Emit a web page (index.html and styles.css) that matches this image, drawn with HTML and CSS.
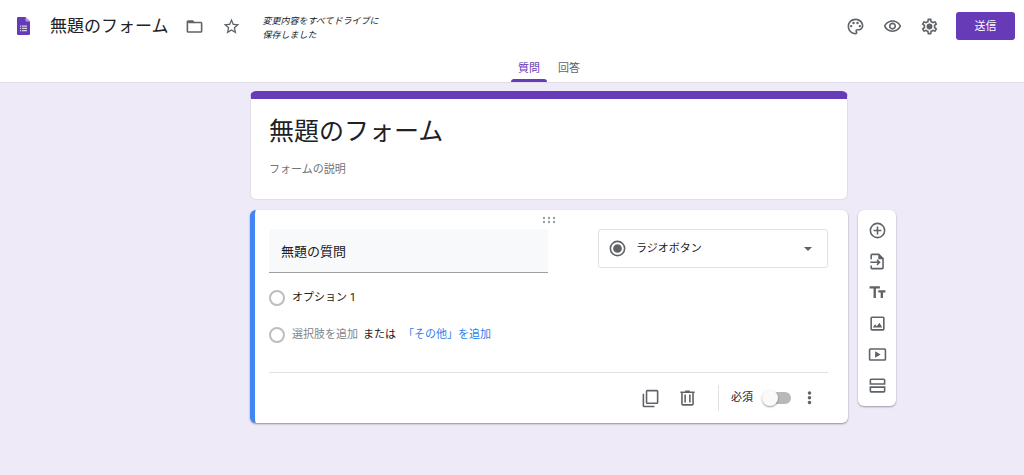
FILE: index.html
```html
<!DOCTYPE html>
<html lang="ja">
<head>
<meta charset="utf-8">
<meta name="viewport" content="width=device-width, initial-scale=1">
<title>無題のフォーム</title>
<link rel="stylesheet" href="styles.css">
</head>
<body>
<header class="header">
  <div class="topbar">
    <svg class="logo" viewBox="0 0 13 18" aria-hidden="true">
      <path fill="#673ab7" d="M1.2 0H8.500L13 4.500V16.800A1.200 1.200 0 0 1 11.800 18H1.200A1.200 1.200 0 0 1 0 16.800V1.200A1.200 1.200 0 0 1 1.200 0z"/>
      <path fill="#b39ddb" d="M8.500 0L13 4.500H9.500a1 1 0 0 1-1-1z"/>
      <path fill="#d9cbef" d="M3 8.600h1.200v1.200H3zM5 8.600h5v1.200H5zM3 10.800h1.200V12H3zM5 10.800h5V12H5zM3 13h1.200v1.200H3zM5 13h5v1.200H5z"/>
    </svg>
    <h1 class="doc-title">無題のフォーム</h1>
    <button class="icon-button" type="button" aria-label="フォルダに移動">
      <svg class="icon" viewBox="0 0 24 24"><path d="M9.170 6l2 2H20v10H4V6h5.170M10 4H4c-1.100 0-1.990.9-1.990 2L2 18c0 1.100.9 2 2 2h16c1.100 0 2-.9 2-2V8c0-1.100-.9-2-2-2h-8l-2-2z"/><path d="M4 5h6l2 3H4z"/></svg>
    </button>
    <button class="icon-button" type="button" aria-label="スターを付ける">
      <svg class="icon" viewBox="0 0 24 24"><path d="M22 9.240l-7.190-.62L12 2 9.190 8.630 2 9.240l5.460 4.730L5.820 21 12 17.270 18.180 21l-1.630-7.030L22 9.240zM12 15.400l-3.760 2.270 1-4.280-3.320-2.880 4.380-.38L12 6.100l1.710 4.040 4.380.38-3.320 2.880 1 4.280L12 15.400z"/></svg>
    </button>
    <p class="save-status">変更内容をすべてドライブに<br>保存しました</p>
    <div class="actions">
      <button class="icon-button" type="button" aria-label="テーマをカスタマイズ">
        <svg class="icon" viewBox="0 0 24 24"><path d="M12 22C6.490 22 2 17.510 2 12S6.490 2 12 2s10 4.040 10 9c0 3.310-2.690 6-6 6h-1.770c-.28 0-.5.22-.5.5 0 .12.05.23.13.33.41.47.64 1.060.64 1.670A2.500 2.500 0 0 1 12 22zm0-18c-4.410 0-8 3.590-8 8s3.590 8 8 8c.28 0 .5-.22.5-.5a.54.54 0 0 0-.14-.35c-.41-.46-.63-1.050-.63-1.650a2.500 2.500 0 0 1 2.500-2.500H16c2.210 0 4-1.790 4-4 0-3.860-3.590-7-8-7z"/><circle cx="6.500" cy="11.500" r="1.500"/><circle cx="9.500" cy="7.500" r="1.500"/><circle cx="14.500" cy="7.500" r="1.500"/><circle cx="17.500" cy="11.500" r="1.500"/></svg>
      </button>
      <button class="icon-button" type="button" aria-label="プレビュー">
        <svg class="icon" viewBox="0 0 24 24"><path d="M12 6c3.790 0 7.170 2.130 8.820 5.500C19.170 14.870 15.790 17 12 17s-7.170-2.130-8.820-5.500C4.830 8.130 8.210 6 12 6m0-2C7 4 2.730 7.110 1 11.500 2.730 15.890 7 19 12 19s9.270-3.110 11-7.500C21.270 7.110 17 4 12 4zm0 5a2.500 2.500 0 1 1 0 5 2.500 2.500 0 0 1 0-5m0-2c-2.480 0-4.500 2.020-4.500 4.500S9.520 16 12 16s4.500-2.020 4.500-4.500S14.480 7 12 7z"/></svg>
      </button>
      <button class="icon-button" type="button" aria-label="設定">
        <svg class="icon" viewBox="0 0 24 24"><path d="M19.430 12.980c.04-.32.07-.64.07-.98 0-.34-.03-.66-.07-.98l2.110-1.650c.19-.15.24-.42.12-.64l-2-3.460c-.09-.16-.26-.25-.44-.25-.06 0-.12.01-.17.03l-2.490 1c-.52-.4-1.080-.73-1.690-.98l-.38-2.650C14.460 2.180 14.250 2 14 2h-4c-.25 0-.46.18-.49.42l-.38 2.650c-.61.25-1.170.59-1.690.98l-2.490-1c-.06-.02-.12-.03-.18-.03-.17 0-.34.09-.43.25l-2 3.460c-.13.22-.07.49.12.64l2.110 1.650c-.04.32-.07.65-.07.98s.03.66.07.98l-2.110 1.650c-.19.15-.24.42-.12.64l2 3.460c.09.16.26.25.44.25.06 0 .12-.01.17-.03l2.490-1c.52.4 1.080.73 1.690.98l.38 2.650c.03.24.24.42.49.42h4c.25 0 .46-.18.49-.42l.38-2.650c.61-.25 1.170-.59 1.690-.98l2.490 1c.06.02.12.03.18.03.17 0 .34-.09.43-.25l2-3.460c.12-.22.07-.49-.12-.64l-2.110-1.650zm-1.980-1.710c.04.31.05.52.05.73 0 .21-.02.43-.05.73l-.14 1.130.89.7 1.080.84-.7 1.210-1.270-.51-1.040-.42-.9.68c-.43.32-.84.56-1.250.73l-1.060.43-.16 1.130-.2 1.350h-1.400l-.19-1.350-.16-1.130-1.060-.43c-.43-.18-.83-.41-1.230-.71l-.91-.7-1.060.43-1.270.51-.7-1.210 1.080-.84.89-.7-.14-1.130c-.03-.31-.05-.54-.05-.74s.02-.43.05-.73l.14-1.130-.89-.7-1.080-.84.7-1.210 1.270.51 1.040.42.9-.68c.43-.32.84-.56 1.250-.73l1.060-.43.16-1.130.2-1.350h1.390l.19 1.350.16 1.130 1.060.43c.43.18.83.41 1.230.71l.91.7 1.060-.43 1.270-.51.7 1.210-1.070.85-.89.7.14 1.130z"/><circle cx="12" cy="12" r="3.700"/></svg>
      </button>
      <button class="send" type="button">送信</button>
    </div>
  </div>
  <nav class="tabs">
    <a class="tab tab-active" href="#questions" aria-current="page">質問</a>
    <a class="tab" href="#responses">回答</a>
  </nav>
</header>

<main class="editor" id="questions">
  <div class="cards">
    <section class="card title-card">
      <input class="form-title" type="text" value="無題のフォーム" aria-label="フォームのタイトル">
      <input class="form-description" type="text" placeholder="フォームの説明" aria-label="フォームの説明">
    </section>

    <section class="card question-card">
      <svg class="drag-handle" viewBox="0 0 14 8" aria-hidden="true"><circle cx="2" cy="2" r="1.200"/><circle cx="7" cy="2" r="1.200"/><circle cx="12" cy="2" r="1.200"/><circle cx="2" cy="6" r="1.200"/><circle cx="7" cy="6" r="1.200"/><circle cx="12" cy="6" r="1.200"/></svg>
      <div class="question-head">
        <input class="question-title" type="text" value="無題の質問" aria-label="質問">
        <div class="type-picker">
          <svg class="icon" viewBox="0 0 24 24" aria-hidden="true"><path d="M12 2a10 10 0 1 0 0 20 10 10 0 0 0 0-20zm0 18a8 8 0 1 1 0-16 8 8 0 0 1 0 16z"/><circle cx="12" cy="12" r="5.500"/></svg>
          <select class="type-select" aria-label="質問の種類">
            <option>ラジオボタン</option>
            <option>チェックボックス</option>
            <option>プルダウン</option>
          </select>
          <svg class="caret" viewBox="0 0 8 4" aria-hidden="true"><path d="M0 0h8L4 4z"/></svg>
        </div>
      </div>
      <div class="options">
        <div class="option">
          <input class="radio" type="radio" name="answer" id="option-1" disabled>
          <label class="option-label" for="option-1">オプション 1</label>
        </div>
        <div class="option">
          <input class="radio" type="radio" name="answer" aria-label="新しい選択肢" disabled>
          <button class="add-option" type="button">選択肢を追加</button>
          <span class="or">または</span>
          <button class="add-other" type="button">「その他」を追加</button>
        </div>
      </div>
      <footer class="question-foot">
        <button class="icon-button" type="button" aria-label="コピーを作成">
          <svg class="icon" viewBox="0 0 24 24"><path d="M20 1H8a2 2 0 0 0-2 2v14a2 2 0 0 0 2 2h12a2 2 0 0 0 2-2V3a2 2 0 0 0-2-2zm0 16H8V3h12zM2 6h2v15h13v2H4a2 2 0 0 1-2-2z"/></svg>
        </button>
        <button class="icon-button" type="button" aria-label="削除">
          <svg class="icon" viewBox="0 0 24 24"><path d="M15 3V2H9v1H3v2h1v14c0 1.100.9 2 2 2h12c1.100 0 2-.9 2-2V5h1V3h-6zm3 16H6V5h12v14zM8 7h2v10H8zm6 0h2v10h-2z"/></svg>
        </button>
        <label class="required">必須<input class="switch" type="checkbox" role="switch"></label>
        <button class="more" type="button" aria-label="その他のオプション">
          <svg class="icon" viewBox="0 0 24 24"><circle cx="12" cy="5" r="2.200"/><circle cx="12" cy="11" r="2.200"/><circle cx="12" cy="17" r="2.200"/></svg>
        </button>
      </footer>
    </section>
  </div>

  <div class="toolbar" role="toolbar" aria-label="追加">
    <button class="tool" type="button" aria-label="質問を追加">
      <svg class="icon" viewBox="0 0 24 24"><path d="M13 7h-2v4H7v2h4v4h2v-4h4v-2h-4V7zm-1-5a10 10 0 1 0 0 20 10 10 0 0 0 0-20zm0 18a8 8 0 1 1 0-16 8 8 0 0 1 0 16z"/></svg>
    </button>
    <button class="tool" type="button" aria-label="質問をインポート">
      <svg class="icon" viewBox="0 0 24 24"><path d="M14 2H5a2 2 0 0 0-2 2v5h2V4h8v5h5v11H5v-3H3v3a2 2 0 0 0 2 2h13a2 2 0 0 0 2-2V8zM12 17l4-4-4-4-1.400 1.400L12.200 12H3v2h9.200l-1.600 1.600z"/></svg>
    </button>
    <button class="tool" type="button" aria-label="タイトルと説明を追加">
      <svg class="icon" viewBox="0 0 24 24"><path d="M2 4v3h5v12h3V7h5V4H2zm20 5h-9v3h3v7h3v-7h3V9z"/></svg>
    </button>
    <button class="tool" type="button" aria-label="画像を追加">
      <svg class="icon" viewBox="0 0 24 24"><path d="M19 3H5a2 2 0 0 0-2 2v14a2 2 0 0 0 2 2h14a2 2 0 0 0 2-2V5a2 2 0 0 0-2-2zm0 16H5V5h14zM6 17l3-4 2 2.500 3.500-4.500L18 17z"/></svg>
    </button>
    <button class="tool" type="button" aria-label="動画を追加">
      <svg class="icon" viewBox="0 0 24 24"><path d="M21 4H3a2 2 0 0 0-2 2v12a2 2 0 0 0 2 2h18a2 2 0 0 0 2-2V6a2 2 0 0 0-2-2zm0 14H3V6h18zM9 8v8l7-4z"/></svg>
    </button>
    <button class="tool" type="button" aria-label="セクションを追加">
      <svg class="icon" viewBox="0 0 24 24"><path d="M20 3H4a2 2 0 0 0-2 2v6h20V5a2 2 0 0 0-2-2zm0 6H4V5h16zM2 13v6a2 2 0 0 0 2 2h16a2 2 0 0 0 2-2v-6zm18 6H4v-4h16z"/></svg>
    </button>
  </div>
</main>
</body>
</html>
```
FILE: styles.css
```css
*,
*::before,
*::after {
  box-sizing: border-box;
}

body {
  margin: 0;
  min-height: 100vh;
  background: #eeeaf7;
  color: #202124;
  font: 11px/16px Roboto, "Noto Sans CJK JP", sans-serif;
}

button,
input,
select {
  margin: 0;
  padding: 0;
  border: 0;
  background: none;
  color: inherit;
  font: inherit;
}

button {
  cursor: pointer;
}

.icon {
  display: block;
  width: 19px;
  height: 19px;
  flex: none;
  fill: #5f6368;
}

.icon-button {
  display: grid;
  place-items: center;
  width: 37px;
  height: 32px;
}

/* Header */

.header {
  background: #fff;
  border-bottom: 1px solid #dfdde6;
}

.topbar {
  display: flex;
  align-items: center;
  height: 52px;
  padding: 0 9px 0 17px;
}

.logo {
  width: 13px;
  height: 18px;
  margin-right: 20px;
}

.doc-title {
  margin: 0 7px 0 0;
  font-size: 17px;
  font-weight: 400;
  line-height: 24px;
}

.save-status {
  margin: 4px 0 0 13px;
  font-size: 9px;
  line-height: 14px;
  font-style: italic;
}

.actions {
  display: flex;
  align-items: center;
  margin-left: auto;
}

.send {
  width: 59px;
  height: 28px;
  padding-top: 2px;
  margin-left: 8px;
  border-radius: 3px;
  background: #673ab7;
  color: #fff;
}

.tabs {
  display: flex;
  justify-content: center;
  gap: 4px;
  height: 30px;
  padding-left: 74px;
}

.tab {
  display: flex;
  flex-direction: column;
  justify-content: space-between;
  padding: 9px 7px 0;
  color: #5f6368;
  text-decoration: none;
}

.tab::after {
  content: "";
  height: 3px;
  margin: 0 -7px;
  border-radius: 3px 3px 0 0;
}

.tab-active {
  color: #673ab7;
}

.tab-active::after {
  background: #673ab7;
}

/* Editor */

.editor {
  display: grid;
  grid-template-columns: 1fr minmax(0, 598px) 1fr;
  column-gap: 10px;
  padding: 8px 0 24px 74px;
}

.cards {
  grid-column: 2;
  display: grid;
  gap: 10px;
}

.card {
  border-radius: 6px;
  background: #fff;
}

.title-card {
  display: grid;
  gap: 13px;
  padding: 10px 18px 21px;
  border: 1px solid #e0dee6;
  border-top: 8px solid #673ab7;
}

.form-title {
  width: 100%;
  height: 40px;
  font-size: 25px;
}

.form-description {
  width: 100%;
  height: 16px;
}

.form-description::placeholder {
  color: #70757a;
  opacity: 1;
}

.question-card {
  padding: 6px 20px 9px 14px;
  border-left: 5px solid #4285f4;
  box-shadow: 0 1px 2px rgba(0, 0, 0, 0.4);
}

.drag-handle {
  display: block;
  width: 14px;
  height: 8px;
  margin: 0 auto 5px;
  fill: #9aa0a6;
}

.question-head {
  display: flex;
  align-items: flex-start;
  gap: 50px;
}

.question-title {
  flex: 1;
  min-width: 0;
  height: 44px;
  padding: 0 12px;
  border-bottom: 1px solid #9a9fa4;
  border-radius: 3px 3px 0 0;
  background: #f8f9fa;
  font-size: 13px;
}

.type-picker {
  display: grid;
  grid-template-columns: 37px 1fr 23px;
  align-items: center;
  width: 230px;
  height: 39px;
  border: 1px solid #e0e1e4;
  border-radius: 3px;
}

.type-picker > * {
  grid-row: 1;
}

.type-picker .icon {
  grid-column: 1;
  justify-self: center;
}

.type-select {
  grid-column: 1 / -1;
  width: 100%;
  height: 37px;
  padding-left: 37px;
  appearance: none;
}

.caret {
  grid-column: 3;
  width: 8px;
  height: 4px;
  fill: #5f6368;
  pointer-events: none;
}

.options {
  padding-top: 6px;
}

.option {
  display: flex;
  align-items: center;
  height: 37px;
}

.radio {
  width: 16px;
  height: 16px;
  margin-right: 7px;
  border: 2px solid #bdbdbd;
  border-radius: 50%;
  appearance: none;
}

.add-option {
  color: #80868b;
}

.or {
  margin: 0 7px 0 5px;
}

.add-other {
  color: #2f80ed;
}

.question-foot {
  display: flex;
  align-items: center;
  justify-content: flex-end;
  margin-top: 19px;
  padding-top: 9px;
  border-top: 1px solid #e0e1e4;
}

.required {
  display: flex;
  align-items: center;
  gap: 9px;
  height: 26px;
  margin-left: 12px;
  padding-left: 12px;
  border-left: 1px solid #e0e1e4;
}

.switch {
  display: flex;
  align-items: center;
  width: 29px;
  height: 12px;
  border-radius: 6px;
  background: linear-gradient(#b9b9b9, #b9b9b9) right / 24px 100% no-repeat;
  appearance: none;
}

.switch::before {
  content: "";
  width: 16px;
  height: 16px;
  flex: none;
  border-radius: 50%;
  background: #fafafa;
  box-shadow: 0 1px 2px rgba(0, 0, 0, 0.4);
}

.switch:checked {
  justify-content: flex-end;
}

.more {
  display: grid;
  place-items: center;
  width: 37px;
  height: 32px;
}

/* Floating toolbar */

.toolbar {
  grid-column: 3;
  align-self: start;
  display: grid;
  width: 38px;
  margin-top: 119px;
  padding: 5px 0;
  border-radius: 6px;
  background: #fff;
  box-shadow: 0 1px 2px rgba(0, 0, 0, 0.35);
}

.tool {
  display: grid;
  place-items: center;
  height: 31px;
}
```
